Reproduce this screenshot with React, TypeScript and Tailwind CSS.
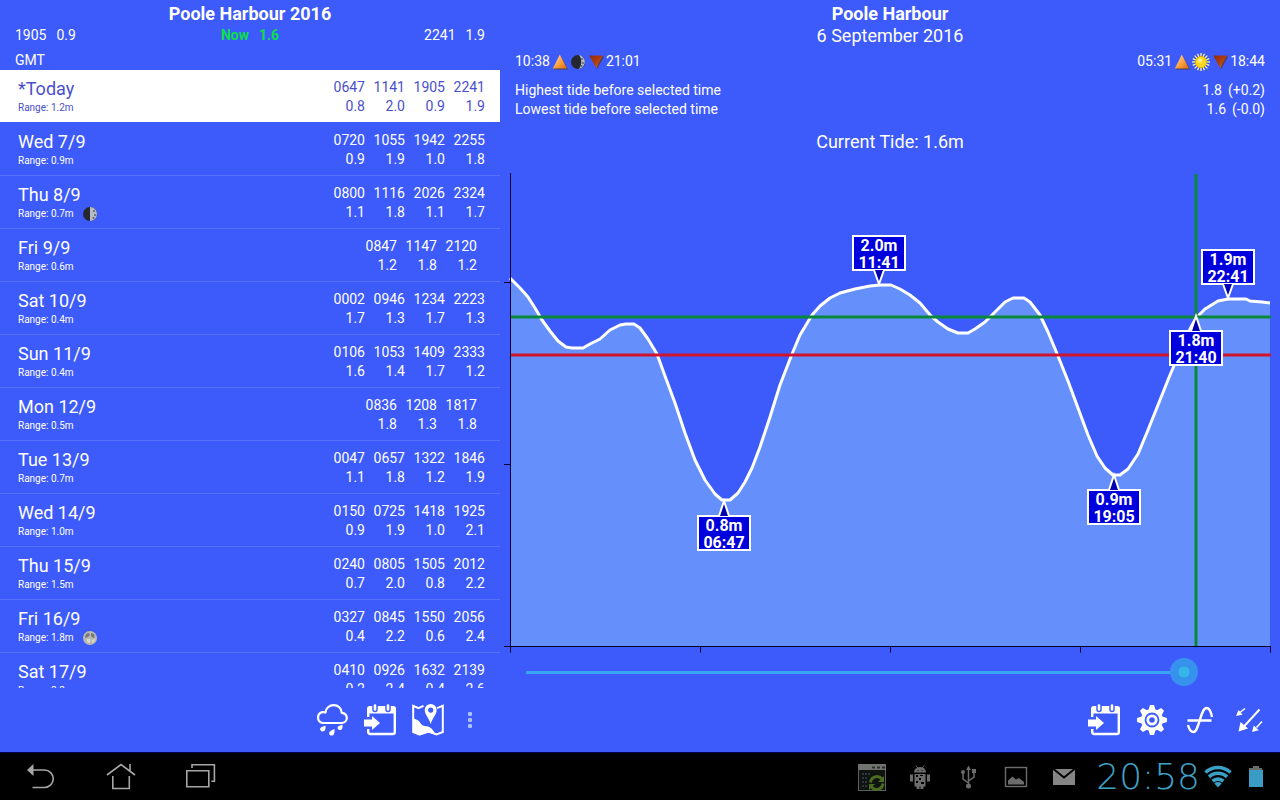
import { useState } from 'react'
import type { CSSProperties, ReactNode } from 'react'

type Moon = 'quarter' | 'full'

interface TideDay {
  day: string
  range: string
  tides: [string, string][]
  moon?: Moon
  today?: boolean
}

const days: TideDay[] = [
  { day: '*Today', range: '1.2m', today: true, tides: [['0647', '0.8'], ['1141', '2.0'], ['1905', '0.9'], ['2241', '1.9']] },
  { day: 'Wed 7/9', range: '0.9m', tides: [['0720', '0.9'], ['1055', '1.9'], ['1942', '1.0'], ['2255', '1.8']] },
  { day: 'Thu 8/9', range: '0.7m', moon: 'quarter', tides: [['0800', '1.1'], ['1116', '1.8'], ['2026', '1.1'], ['2324', '1.7']] },
  { day: 'Fri 9/9', range: '0.6m', tides: [['0847', '1.2'], ['1147', '1.8'], ['2120', '1.2']] },
  { day: 'Sat 10/9', range: '0.4m', tides: [['0002', '1.7'], ['0946', '1.3'], ['1234', '1.7'], ['2223', '1.3']] },
  { day: 'Sun 11/9', range: '0.4m', tides: [['0106', '1.6'], ['1053', '1.4'], ['1409', '1.7'], ['2333', '1.2']] },
  { day: 'Mon 12/9', range: '0.5m', tides: [['0836', '1.8'], ['1208', '1.3'], ['1817', '1.8']] },
  { day: 'Tue 13/9', range: '0.7m', tides: [['0047', '1.1'], ['0657', '1.8'], ['1322', '1.2'], ['1846', '1.9']] },
  { day: 'Wed 14/9', range: '1.0m', tides: [['0150', '0.9'], ['0725', '1.9'], ['1418', '1.0'], ['1925', '2.1']] },
  { day: 'Thu 15/9', range: '1.5m', tides: [['0240', '0.7'], ['0805', '2.0'], ['1505', '0.8'], ['2012', '2.2']] },
  { day: 'Fri 16/9', range: '1.8m', moon: 'full', tides: [['0327', '0.4'], ['0845', '2.2'], ['1550', '0.6'], ['2056', '2.4']] },
  { day: 'Sat 17/9', range: '2.2m', tides: [['0410', '0.2'], ['0926', '2.4'], ['1632', '0.4'], ['2139', '2.6']] },
]

// x runs 0..760 over the day, y is the height above the zero line
const curve: [number, number][] = [
  [0, 368], [10, 358], [18, 349], [25, 338], [32, 326], [40, 315], [48, 305], [56, 299], [62, 298], [73, 298],
  [80, 302], [90, 307], [100, 316], [110, 321], [116, 322], [124, 322], [130, 318], [138, 307], [147, 292],
  [155, 270], [165, 243], [175, 213], [185, 186], [195, 166], [205, 152], [212, 146], [220, 146], [228, 153],
  [235, 164], [242, 178], [250, 199], [260, 229], [270, 261], [282, 292], [290, 311], [302, 331], [310, 340],
  [320, 348], [330, 353], [345, 357], [360, 360], [370, 361], [381, 361], [390, 357], [400, 351], [410, 343],
  [421, 330], [428, 324], [438, 317], [448, 313], [458, 313], [465, 317], [475, 324], [485, 334], [495, 344],
  [503, 348], [514, 348], [520, 344], [530, 331], [538, 314], [548, 290], [558, 265], [568, 238], [578, 211],
  [587, 190], [595, 178], [603, 171], [610, 171], [618, 177], [628, 192], [638, 216], [648, 241], [660, 271],
  [670, 294], [680, 317], [686, 328], [695, 337], [708, 345], [718, 347], [736, 347], [740, 345], [752, 344], [760, 343],
]

const ORIGIN_X = 10
const ORIGIN_Y = 486

const line = curve.map(([x, y]) => `${ORIGIN_X + x} ${ORIGIN_Y - y}`).join('L')

function MoonIcon({ phase }: { phase: Moon | 'crescent' }) {
  return (
    <svg className="size-4" viewBox="0 0 16 16" aria-hidden="true">
      <circle cx="8" cy="8" r="7" fill={phase === 'full' ? '#b9b9b4' : '#252833'} />
      {phase === 'quarter' && <path d="M8 1a7 7 0 0 1 0 14z" fill="#b8bac4" />}
      {phase === 'crescent' && <path d="M9 1.1a7 7 0 0 1 0 13.8c3-3.4 3-10.4 0-13.8z" fill="#b5bdc9" />}
      {phase !== 'full' && (
        <g fill="#5d6270">
          <circle cx="12" cy="5" r="1" />
          <circle cx="13" cy="9" r="1" />
          <circle cx="11.5" cy="12" r="1" />
        </g>
      )}
      {phase === 'full' && (
        <g>
          <path d="M4 4l3-1 1 2-2 2-3 1zM9 3l3 1 1 3-2 1-2-2z" fill="#77797c" />
          <path d="M5 9l3 0 0 4-3-1zM10 10l3-1-1 3-2 1z" fill="#dcdbc4" />
        </g>
      )}
    </svg>
  )
}

function RiseIcon({ id }: { id: string }) {
  return (
    <svg className="size-4" viewBox="0 0 16 16" aria-hidden="true">
      <defs>
        <linearGradient id={id} x1="0" y1="0" x2="1" y2="1">
          <stop offset="0" stopColor="#ffe0b0" />
          <stop offset="0.6" stopColor="#f79a35" />
          <stop offset="1" stopColor="#d66a14" />
        </linearGradient>
      </defs>
      <path d="M8.5 1.500L16 15.500H2z" fill="#4a3d55" />
      <path d="M7.8 0.500L15 14.500H0.800z" fill={`url(#${id})`} />
    </svg>
  )
}

function SetIcon({ id }: { id: string }) {
  return (
    <svg className="size-4" viewBox="0 0 16 16" aria-hidden="true">
      <defs>
        <linearGradient id={id} x1="0" y1="0" x2="1" y2="1">
          <stop offset="0" stopColor="#8f2a10" />
          <stop offset="0.6" stopColor="#b6420f" />
          <stop offset="1" stopColor="#ee8a3c" />
        </linearGradient>
      </defs>
      <path d="M2 2.500H16L9 15z" fill="#4a3d55" />
      <path d="M1.200 1.500H15L8.300 14z" fill={`url(#${id})`} />
    </svg>
  )
}

function SunIcon() {
  return (
    <svg className="size-[18px]" viewBox="0 0 18 18" aria-hidden="true">
      <g stroke="#fdf6a0" strokeWidth="1.3">
        {Array.from({ length: 8 }, (_, i) => (
          <path key={i} d="M9 0V18" transform={`rotate(${i * 22.5} 9 9)`} />
        ))}
      </g>
      <circle cx="9" cy="9" r="6" fill="#d9a900" />
      <circle cx="9" cy="9" r="5.2" fill="#f8d820" />
      <circle cx="8" cy="7.5" r="2.2" fill="#fff27a" />
    </svg>
  )
}

function CalendarIcon() {
  return (
    <svg className="size-8" viewBox="0 0 32 32" aria-hidden="true">
      <path d="M4.200 13V5.500a2 2 0 0 1 2-2h22.600a2 2 0 0 1 2 2V28a2 2 0 0 1-2 2H6.200a2 2 0 0 1-2-2v-3" fill="none" stroke="#fff" strokeWidth="2.4" />
      <path d="M3 9.500V5a3 3 0 0 1 3-3h23a3 3 0 0 1 3 3v4.500z" fill="#fff" />
      <g strokeLinecap="round">
        <path d="M11 1.500v4M24 1.500v4" stroke="#3d5afa" strokeWidth="5.5" />
        <path d="M11 1.500v4M24 1.500v4" stroke="#fff" strokeWidth="2.6" />
      </g>
      <path d="M0 15.500h8v-3.500l8 7-8 7v-3.500H0z" fill="#fff" />
    </svg>
  )
}

function RainIcon() {
  return (
    <svg className="size-8" viewBox="0 0 32 32" aria-hidden="true">
      <path d="M6.500 19A5.500 5.500 0 0 1 6.500 8.200C7.700 8 8.700 8.200 9.500 8.600 9.500 4.200 13.500 1.200 17.700 1.200c4.400 0 7.800 3.100 8 7.600 3 .3 5.100 2.400 5.100 5.200s-2.300 5-5.300 5z" fill="none" stroke="#fff" strokeWidth="2.2" strokeLinejoin="round" />
      <path d="M9.500 21.500c.2 2.500.2 6-3 6a2.400 2.400 0 0 1-2.300-3c.5-1.700 3.300-1.800 5.300-3zM18.500 25c.2 2.500.2 6.600-3 6.600a2.400 2.400 0 0 1-2.300-3c.5-1.700 3.300-2.400 5.300-3.600zM26.500 20.500c.2 2.500.2 5.600-2.600 5.600a2.300 2.300 0 0 1-2.300-2.800c.5-1.600 2.900-1.600 4.900-2.800z" fill="#fff" />
    </svg>
  )
}

function MapIcon() {
  return (
    <svg className="size-8" viewBox="0 0 32 32" aria-hidden="true">
      <path d="M11.500 1.800L6.500 4.200 1.200 1.800V28L7.500 30.500 16.500 27.500 24.500 30.500 30.800 28V1.800L25 4.200" fill="none" stroke="#fff" strokeWidth="2" />
      <path d="M1 14.500C4 15 7 16.500 8 18.500c1.500 3 4 3.500 6.500 3.800 4 .4 6.500 3 9 8.200L16.500 28.500 7.500 31.500 1 28.500z" fill="#fff" />
      <path d="M18.700 0a5.900 5.900 0 0 1 5.900 6.200c0 4-3.900 7.300-5.900 13.800-2-6.500-5.900-9.800-5.900-13.800A5.900 5.900 0 0 1 18.700 0zm0 3.500a2.600 2.600 0 1 0 0 5.200 2.600 2.600 0 0 0 0-5.200z" fill="#fff" />
    </svg>
  )
}

function GearIcon() {
  return (
    <svg className="size-8" viewBox="0 0 32 32" aria-hidden="true">
      <g fill="#fff">
        {Array.from({ length: 8 }, (_, i) => (
          <path key={i} d="M14 1h4l1.500 5h-7z" transform={`rotate(${i * 45} 16 16)`} />
        ))}
      </g>
      <circle cx="16" cy="16" r="9.2" fill="none" stroke="#fff" strokeWidth="3.6" />
      <circle cx="16" cy="16" r="4.2" fill="none" stroke="#fff" strokeWidth="2.8" />
    </svg>
  )
}

function WaveIcon() {
  return (
    <svg className="size-8" viewBox="0 0 32 32" fill="none" stroke="#fff" strokeWidth="2.4" aria-hidden="true">
      <path d="M3.500 16.500h24M4 21c1 4 3 7 5.500 7 5.500 0 7-24 13-24 2.500 0 4.500 3.500 5.500 9" />
    </svg>
  )
}

function ArrowsIcon() {
  return (
    <svg className="size-8" viewBox="0 0 32 32" aria-hidden="true">
      <g fill="none" stroke="#fff" strokeWidth="2">
        <path d="M27.500 5.500L11 23.500" />
        <path d="M13 4.500L8 8.500M30 17.500L24.500 23.500" strokeWidth="1.6" />
      </g>
      <path d="M6.500 27.500l2-9.500 7.500 6.500zM4 12l2.500-6 4 4.700zM20 28l1.800-6.500 5 4.700z" fill="#fff" />
    </svg>
  )
}

function DotsIcon() {
  return (
    <svg className="h-5 w-2" viewBox="0 0 8 20" fill="#a9c2fd" aria-hidden="true">
      <rect x="2" y="2" width="4" height="4" rx="1" />
      <rect x="2" y="8" width="4" height="4" rx="1" />
      <rect x="2" y="14" width="4" height="4" rx="1" />
    </svg>
  )
}

function ToolButton({ label, narrow, children }: { label: string; narrow?: boolean; children: ReactNode }) {
  return (
    <button type="button" aria-label={label} className={`flex h-12 items-center justify-center ${narrow ? 'w-9' : 'w-12'}`}>
      {children}
    </button>
  )
}

function TideRow({ item }: { item: TideDay }) {
  return (
    <li
      className={`flex justify-between border-b pr-[15px] pl-[18px] ${
        item.today ? 'border-[#3d5afa] bg-white text-[#4a50cc]' : 'border-[#5873fb]'
      }`}
    >
      <div className="py-[7px]">
        <div className="text-lg leading-6">{item.day}</div>
        <div className="flex h-[14px] items-center gap-2 text-[10px] leading-[14px]">
          Range: {item.range}
          {item.moon && <MoonIcon phase={item.moon} />}
        </div>
      </div>
      <div className={`flex gap-2 pt-2 text-right text-sm leading-[19px] ${item.tides.length === 3 ? 'pr-2' : ''}`}>
        {item.tides.map(([time, height]) => (
          <div key={time} className="w-8">
            <div>{time}</div>
            <div>{height}</div>
          </div>
        ))}
      </div>
    </li>
  )
}

function TideList() {
  return (
    <section className="flex min-h-0 flex-col">
      <header className="px-[15px] pt-0.5 text-sm leading-[19px]">
        <h1 className="text-center text-lg leading-6 font-bold">Poole Harbour 2016</h1>
        <div className="grid grid-cols-3">
          <div className="flex gap-2.5">
            <span>1905</span>
            <span>0.9</span>
          </div>
          <div className="flex justify-center gap-2.5 font-bold text-[#0be047]">
            <span>Now</span>
            <span>1.6</span>
          </div>
          <div className="flex justify-end gap-2.5">
            <span>2241</span>
            <span>1.9</span>
          </div>
        </div>
        <div className="mt-1.5">GMT</div>
      </header>
      <ul className="min-h-0 flex-1 overflow-y-auto [scrollbar-width:none]">
        {days.map((item) => (
          <TideRow key={item.day} item={item} />
        ))}
      </ul>
      <div className="flex h-16 items-center justify-end pr-3">
        <ToolButton label="Weather">
          <RainIcon />
        </ToolButton>
        <ToolButton label="Go to date">
          <CalendarIcon />
        </ToolButton>
        <ToolButton label="Map">
          <MapIcon />
        </ToolButton>
        <ToolButton label="More" narrow>
          <DotsIcon />
        </ToolButton>
      </div>
    </section>
  )
}

// Callout with its tip on the curve, the box sits above or below it
function Callout({ x, y, height, time, above }: { x: number; y: number; height: string; time: string; above?: boolean }) {
  const top = above ? y - 48 : y + 15
  return (
    <g>
      <rect x={x - 26} y={top} width="52" height="34" fill="#0000dc" stroke="#fff" strokeWidth="2" />
      <g fill="#fff" fontSize="16" fontWeight="700" textAnchor="middle">
        <text x={x} y={top + 15}>{height}</text>
        <text x={x} y={top + 32}>{time}</text>
      </g>
      <path
        d={above ? `M${x - 5} ${y - 14}L${x} ${y}L${x + 5} ${y - 14}` : `M${x - 5} ${y + 15}L${x} ${y}L${x + 5} ${y + 15}`}
        fill="#0000b0"
        stroke="#fff"
        strokeWidth="2"
      />
    </g>
  )
}

function TideChart() {
  return (
    <svg className="min-h-0 w-full flex-1" viewBox="0 0 780 496" role="img" aria-label="Tide height through the day">
      <path d={`M10 486L${line}L770 486Z`} fill="#6590fc" />
      <path d={`M${line}`} fill="none" stroke="#fff" strokeWidth="3" strokeLinejoin="round" />
      <path d="M10 195H771" stroke="#d0142c" strokeWidth="3" />
      <path d="M10 157H771M696 14V486" stroke="#088838" strokeWidth="3" />
      <path
        d="M10.500 13V492.500M4 122.500H10M4 304.500H10M4 486.500H771M200.500 486V492.500M390.500 486V492.500M580.500 486V492.500M770.500 486V492.500"
        stroke="#000030"
        fill="none"
      />
      <Callout x={224} y={341} height="0.8m" time="06:47" />
      <Callout x={379} y={124} height="2.0m" time="11:41" above />
      <Callout x={614} y={315} height="0.9m" time="19:05" />
      <Callout x={728} y={138} height="1.9m" time="22:41" above />
      <Callout x={696} y={156} height="1.8m" time="21:40" />
    </svg>
  )
}

function TideGraph() {
  const [minutes, setMinutes] = useState(1302)
  return (
    <section className="flex min-h-0 flex-col">
      <header className="px-[15px] pt-0.5 text-sm leading-[19px]">
        <h2 className="text-center text-lg leading-6 font-bold">Poole Harbour</h2>
        <p className="text-center text-lg leading-5">6 September 2016</p>
        <div className="mt-1.5 flex justify-between">
          <div className="flex items-center gap-0.5">
            <span>10:38</span>
            <RiseIcon id="moonrise" />
            <MoonIcon phase="crescent" />
            <SetIcon id="moonset" />
            <span>21:01</span>
          </div>
          <div className="flex items-center gap-0.5">
            <span>05:31</span>
            <RiseIcon id="sunrise" />
            <SunIcon />
            <SetIcon id="sunset" />
            <span>18:44</span>
          </div>
        </div>
        <div className="mt-2.5 flex justify-between">
          <span>Highest tide before selected time</span>
          <span className="flex gap-1.5">
            <span>1.8</span>
            <span>(+0.2)</span>
          </span>
        </div>
        <div className="flex justify-between">
          <span>Lowest tide before selected time</span>
          <span className="flex gap-1.5">
            <span>1.6</span>
            <span>(-0.0)</span>
          </span>
        </div>
        <p className="mt-[11px] pb-1.5 text-center text-lg leading-6">Current Tide: 1.6m</p>
      </header>
      <TideChart />
      <div className="flex h-8 items-center px-3">
        <input
          type="range"
          aria-label="Selected time"
          min={0}
          max={1440}
          value={minutes}
          onChange={(e) => setMinutes(Number(e.target.value))}
          className="h-7 w-full appearance-none bg-[linear-gradient(#38a4f4,#38a4f4)] bg-[length:var(--fill)_3px] bg-[position:14px_center] bg-no-repeat outline-none [&::-webkit-slider-thumb]:size-7 [&::-webkit-slider-thumb]:appearance-none [&::-webkit-slider-thumb]:rounded-full [&::-webkit-slider-thumb]:bg-[radial-gradient(circle,#35b5e8_5px,#3792ee_6px)]"
          style={{ '--fill': `calc((100% - 28px) * ${minutes / 1440})` } as CSSProperties}
        />
      </div>
      <div className="flex h-16 items-center justify-end pr-2">
        <ToolButton label="Go to date">
          <CalendarIcon />
        </ToolButton>
        <ToolButton label="Settings">
          <GearIcon />
        </ToolButton>
        <ToolButton label="Tide curve">
          <WaveIcon />
        </ToolButton>
        <ToolButton label="Wind">
          <ArrowsIcon />
        </ToolButton>
      </div>
    </section>
  )
}

function SystemBar() {
  return (
    <footer className="flex h-12 items-center justify-between border-t border-[#000050] bg-black">
      <nav className="flex text-[#a6a6a6]">
        <button type="button" aria-label="Back" className="flex w-20 justify-center">
          <svg className="size-8" viewBox="0 0 32 32" fill="none" stroke="currentColor" strokeWidth="1.6">
            <path d="M8 9h12.500a8.700 8.700 0 0 1 0 17.500H8.500" />
            <path d="M3 9l6.500-6v12z" fill="currentColor" stroke="none" />
          </svg>
        </button>
        <button type="button" aria-label="Home" className="flex w-20 justify-center">
          <svg className="size-8" viewBox="0 0 32 32" fill="none" stroke="currentColor" strokeWidth="1.6">
            <path d="M3 14L17 3.500 31 14M8.800 15v12.500h16.500V15M26 10V3" />
          </svg>
        </button>
        <button type="button" aria-label="Recent apps" className="flex w-20 justify-center">
          <svg className="size-8" viewBox="0 0 32 32" fill="none" stroke="currentColor" strokeWidth="1.6">
            <path d="M2.800 9.800h22v16h-22zM8 7V3.800h22.400v16.400h-3" />
          </svg>
        </button>
      </nav>
      <div className="flex items-center gap-4 pr-4 text-[#6c6c6c]">
        <svg className="size-8" viewBox="0 0 32 32">
          <rect x="2.500" y="3.500" width="27" height="26" fill="#101410" stroke="#5c5f5c" />
          <rect x="2" y="3" width="28" height="6" fill="#6f726f" />
          <path d="M16 6.500h3M21 6.500h3M26 6.500h3" stroke="#2c2f2c" strokeWidth="2" />
          <path d="M6 13h8M6 17h6M6 21h5M6 25h6" stroke="#2b3344" strokeWidth="2" strokeDasharray="2 1" />
          <path d="M14.500 21.500a6.500 6.500 0 0 1 11.500-3.500M27 22.500a6.500 6.500 0 0 1-11.500 3.500" fill="none" stroke="#4a6c20" strokeWidth="3" />
          <path d="M28 15v6h-6zM13 29v-6h6z" fill="#4a6c20" />
        </svg>
        <svg className="size-8" viewBox="0 0 32 32" fill="currentColor">
          <path d="M10 11.500a6 5.500 0 0 1 12 0zM10.500 13h11v12.500h-2V28h-3v-2.500h-1V28h-3v-2.500h-2zM6 13.500h3v7H6zM23 13.500h3v7h-3z" />
          <path d="M12 4.500l2 3M20 4.500l-2 3" stroke="currentColor" />
          <path d="M12 14h2v2h-2zM15 17h2v2h-2zM12 20h2v2h-2zM16 14h3v1h-3zM17 21h3v2h-3zM13.500 9h1v1h-1zM17.500 9h1v1h-1z" fill="#000" />
        </svg>
        <svg className="size-8" viewBox="0 0 32 32" fill="none" stroke="currentColor" strokeWidth="1.5">
          <path d="M16.500 8v16M16.500 22l-5.500-4V11M16.500 20l5.500-4V12" />
          <path d="M16.500 4.500l2.500 4.500h-5zM20 8h4v4H20z" fill="currentColor" stroke="none" />
          <circle cx="16.500" cy="25" r="2.500" fill="currentColor" stroke="none" />
          <circle cx="11" cy="11" r="2" fill="currentColor" stroke="none" />
        </svg>
        <svg className="size-8" viewBox="0 0 32 32">
          <rect x="5.500" y="6.500" width="21" height="19" fill="none" stroke="currentColor" strokeWidth="1.4" />
          <path d="M8 23.500v-4l4.500-4 3.500 3 3-1.500 5 4v2.500z" fill="currentColor" />
        </svg>
        <svg className="size-8" viewBox="0 0 32 32">
          <path d="M5 8h22v16H5z" fill="#858585" />
          <path d="M5.500 8L16 16.500 26.500 8" fill="none" stroke="#000" strokeWidth="1.8" />
        </svg>
        <div className="flex items-center gap-1">
          <time className="font-['DejaVu_Sans_Light','DejaVu_Sans',sans-serif] text-[36px] leading-9 font-extralight text-[#3fa3c8]">20:58</time>
          <svg className="h-6 w-7" viewBox="0 0 28 24" fill="none" stroke="#3aa0c6" strokeWidth="3.6">
            <path d="M1.500 7.500a18 18 0 0 1 25 0M5 11.900a13 13 0 0 1 18 0M8.600 16.200a8 8 0 0 1 10.800 0" />
            <path d="M10.300 18.500a5.500 5.500 0 0 1 7.400 0L14 22.500z" fill="#3aa0c6" stroke="none" />
          </svg>
          <svg className="ml-3 h-6 w-4" viewBox="0 0 16 24">
            <path d="M5 1h6v2h3v3H1V3h4z" fill="#6a6a6a" />
            <path d="M1 5h14v17H1z" fill="#3a9cc4" />
          </svg>
        </div>
      </div>
    </footer>
  )
}

export default function App() {
  return (
    <div className="flex h-screen flex-col bg-[#3d5afa] font-[Roboto,sans-serif] text-white">
      <main className="grid min-h-0 flex-1 grid-cols-[25fr_39fr] grid-rows-1">
        <TideList />
        <TideGraph />
      </main>
      <SystemBar />
    </div>
  )
}
